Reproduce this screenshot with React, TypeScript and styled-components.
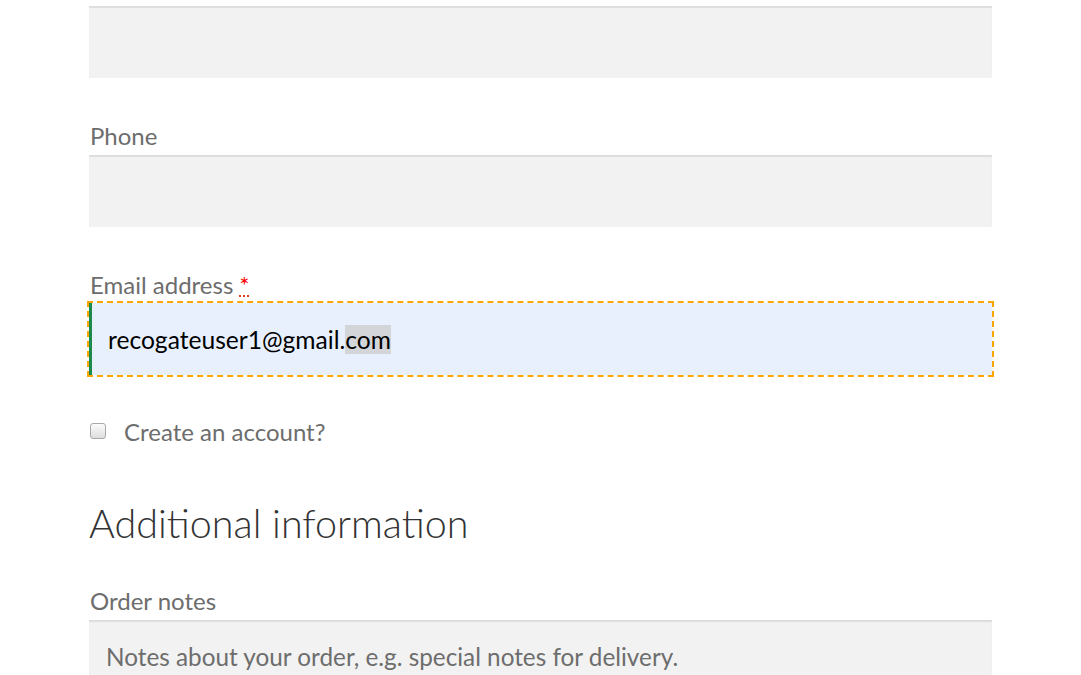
import React from 'react';
import styled, { createGlobalStyle } from 'styled-components';

const GlobalStyle = createGlobalStyle`
    html, body {
        margin: 0;
        padding: 0;
        background: #ffffff;
        overflow: hidden;
    }
    body {
        font-family: Lato, "Liberation Sans", sans-serif;
        color: #6d6d6d;
    }
`;

const Page = styled.div`
    width: 1081px;
    height: 675px;
    overflow: hidden;
    padding: 6px 0 0 89px;
    box-sizing: border-box;
`;

const Form = styled.form`
    width: 903px;
    display: flex;
    flex-direction: column;
`;

const Field = styled.div<{ $last?: boolean }>`
    display: flex;
    flex-direction: column;
    margin-bottom: ${(p) => (p.$last ? '0' : '41px')};
`;

const Label = styled.label`
    font-size: 24px;
    line-height: 34px;
    height: 34px;
    margin-bottom: 2px;
    padding-left: 1px;
    color: #6d6d6d;
`;

const Required = styled.abbr`
    color: #ff0000;
    margin-left: 6px;
    text-decoration: underline dotted #e2401c;
    text-decoration-thickness: 2px;
    text-underline-offset: 1px;
`;

const Input = styled.div<{ $active?: boolean }>`
    box-sizing: border-box;
    height: 72px;
    display: flex;
    align-items: center;
    padding: 0 16px;
    font-size: 24.6px;
    background: ${(p) => (p.$active ? '#e8f0fe' : '#f2f2f2')};
    box-shadow: ${(p) => (p.$active ? 'none' : 'inset 0 2px 1px rgba(0, 0, 0, 0.09)')};
    outline: ${(p) => (p.$active ? '2px dashed #ffa500' : 'none')};
    border-left: ${(p) => (p.$active ? '3px solid #1c8a4c' : 'none')};
    margin-top: ${(p) => (p.$active ? '-1px' : '0')};
    color: #000000;
`;

const Selected = styled.span`
    background: #d3d5d9;
`;

const TextArea = styled.div`
    box-sizing: border-box;
    height: 120px;
    padding: 21px 17px;
    font-size: 24.3px;
    line-height: 32px;
    color: #6d6d6d;
    background: #f2f2f2;
    box-shadow: inset 0 2px 1px rgba(0, 0, 0, 0.09);
`;

const CheckRow = styled.label`
    display: flex;
    align-items: center;
    gap: 18px;
    margin: 40px 0 0 1px;
    height: 32px;
    font-size: 24px;
    color: #6d6d6d;
`;

const Box = styled.span`
    width: 14px;
    height: 14px;
    border: 1px solid #a9a9a9;
    border-radius: 3px;
    background: linear-gradient(#fbfbfb, #dedede);
`;

const Heading = styled.h3`
    margin: 51px 0 36px;
    font-size: 39.5px;
    line-height: 50px;
    font-weight: 300;
    color: #333333;
`;

const App: React.FC = () => (
    <>
        <GlobalStyle />
        <Page>
            <Form>
                <Field>
                    <Input />
                </Field>
                <Field>
                    <Label>Phone</Label>
                    <Input />
                </Field>
                <Field $last>
                    <Label>
                        Email address
                        <Required title="required">*</Required>
                    </Label>
                    <Input $active>
                        recogateuser1@gmail.
                        <Selected>com</Selected>
                    </Input>
                </Field>
                <CheckRow>
                    <Box />
                    Create an account?
                </CheckRow>
                <Heading>Additional information</Heading>
                <Field>
                    <Label>Order notes</Label>
                    <TextArea>Notes about your order, e.g. special notes for delivery.</TextArea>
                </Field>
            </Form>
        </Page>
    </>
);

export default App;
